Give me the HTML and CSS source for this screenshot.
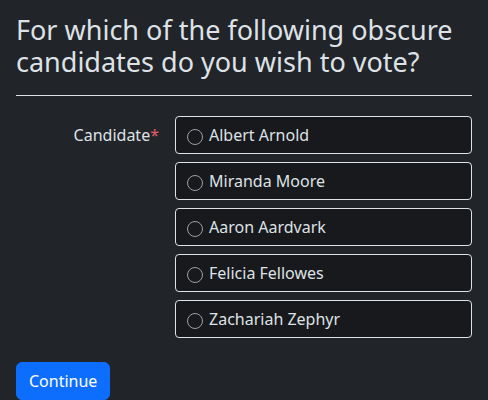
FILE: index.html
```html
<!DOCTYPE html>
<html lang="en">
<head>
<meta charset="utf-8">
<title>Vote</title>
<link rel="stylesheet" href="styles.css">
</head>
<body>
<main class="page">
  <h1 class="title">For which of the following obscure candidates do you wish to vote?</h1>
  <hr class="rule">
  <form class="vote-form">
    <div class="field">
      <div class="field-label">Candidate<span class="req">*</span></div>
      <div class="options">
        <label class="option"><span class="radio"></span>Albert Arnold</label>
        <label class="option"><span class="radio"></span>Miranda Moore</label>
        <label class="option"><span class="radio"></span>Aaron Aardvark</label>
        <label class="option"><span class="radio"></span>Felicia Fellowes</label>
        <label class="option"><span class="radio"></span>Zachariah Zephyr</label>
      </div>
    </div>
    <button type="button" class="btn">Continue</button>
  </form>
</main>
</body>
</html>
```
FILE: styles.css
```css
html, body {
  margin: 0;
  background: #212529;
}
body {
  font-family: "Noto Sans", "Open Sans", sans-serif;
  color: #dee2e6;
  font-size: 16px;
  line-height: 24px;
}
.page {
  padding: 14px 16px 0;
}
.title {
  margin: 0;
  font-size: 27px;
  line-height: 32px;
  font-weight: 400;
  color: #dee2e6;
}
.rule {
  margin: 17px 0 0;
  border: 0;
  border-top: 1px solid #dee2e6;
  height: 0;
}
.vote-form {
  margin-top: 20px;
}
.field {
  display: grid;
  grid-template-columns: 143px 1fr;
  column-gap: 16px;
}
.field-label {
  text-align: right;
  padding-top: 7px;
  color: #dee2e6;
}
.req {
  color: #e35d6a;
}
.options {
  display: flex;
  flex-direction: column;
  gap: 8px;
}
.option {
  display: flex;
  align-items: flex-start;
  background: #17191c;
  border: 1px solid #dee2e6;
  border-radius: 4px;
  padding: 6px 11px;
  color: #dee2e6;
}
.radio {
  width: 16px;
  height: 16px;
  box-sizing: border-box;
  border: 1.5px solid #9aa0a6;
  border-radius: 50%;
  margin-top: 6px;
  margin-right: 6px;
  flex: none;
}
.btn {
  margin-top: 24px;
  font-family: inherit;
  font-size: 16px;
  line-height: 24px;
  padding: 6px 12px;
  border: 1px solid #0d6efd;
  background: #0d6efd;
  color: #fff;
  border-radius: 6px;
}
```
